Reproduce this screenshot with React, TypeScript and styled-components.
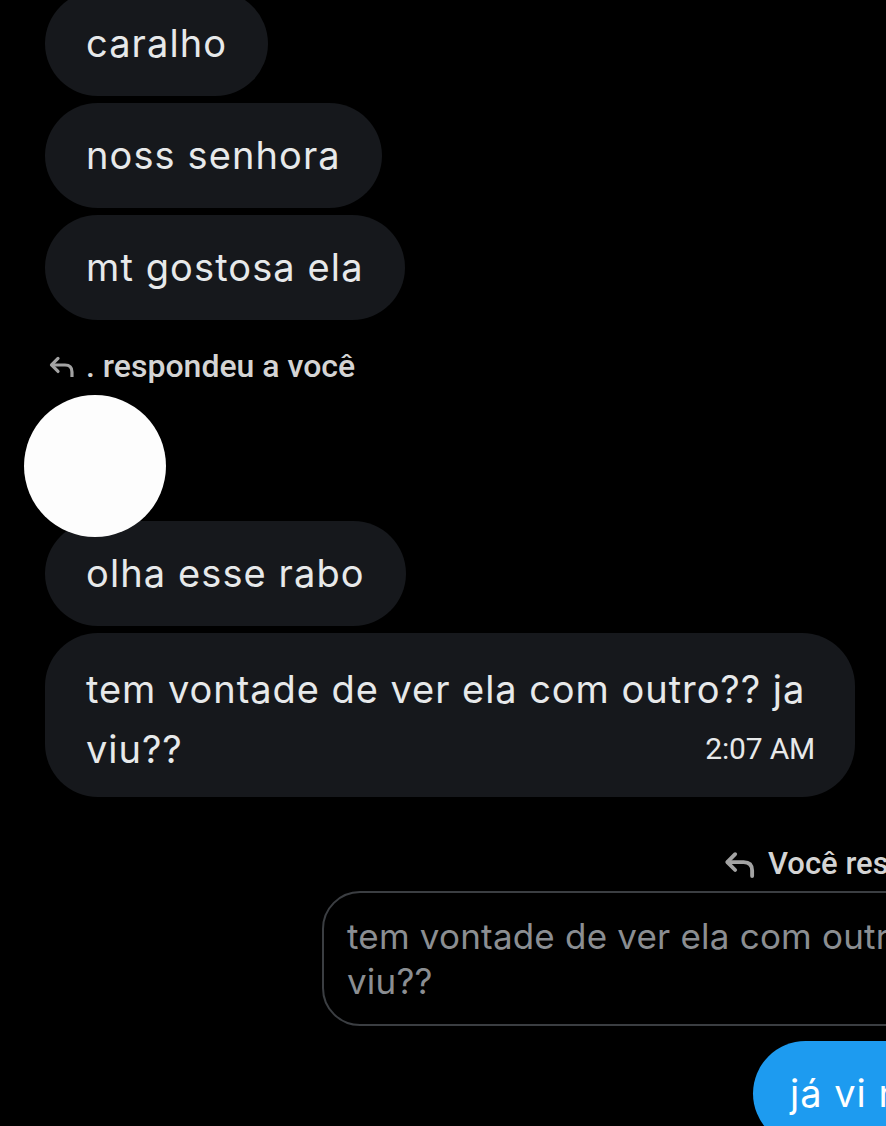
import React from "react";
import styled, { createGlobalStyle } from "styled-components";

const Global = createGlobalStyle`
  html, body {
    margin: 0;
    padding: 0;
    background: #000;
    overflow: hidden;
  }
  body {
    width: 886px;
    height: 1126px;
    font-family: Inter, "Noto Sans", sans-serif;
    -webkit-font-smoothing: antialiased;
  }
`;

const Page = styled.div`
  width: 886px;
  height: 1126px;
  overflow: hidden;
  background: #000;
  display: flex;
  flex-direction: column;
  align-items: flex-start;
`;

const Thread = styled.div`
  display: flex;
  flex-direction: column;
  align-items: flex-start;
  gap: 7px;
  margin-top: -9px;
  padding-left: 45px;
`;

const Bubble = styled.div`
  background: #16181c;
  color: #e7e9ea;
  font-size: 38px;
  line-height: 45px;
  padding: 30px 41px;
  border-radius: 53px;
  letter-spacing: 1.1px;
  white-space: nowrap;
  position: relative;
  z-index: 1;
`;

const LongBubble = styled.div`
  box-sizing: border-box;
  width: 810px;
  background: #16181c;
  color: #e7e9ea;
  font-size: 38px;
  line-height: 60px;
  padding: 26px 40px 18px 41px;
  border-radius: 53px;
  letter-spacing: 0.95px;
`;

const Time = styled.span`
  float: right;
  font-family: Roboto, "Liberation Sans", sans-serif;
  font-size: 30px;
  letter-spacing: -0.2px;
  line-height: 60px;
  color: #e7e9ea;
`;

const ReplyLabel = styled.div<{ $size: number; $gap: number; $offset?: number }>`
  display: flex;
  align-items: center;
  gap: ${(p) => p.$gap}px;
  margin-left: ${(p) => p.$offset ?? 0}px;
  font-family: Roboto, "Liberation Sans", sans-serif;
  font-weight: 500;
  font-size: ${(p) => p.$size}px;
  line-height: 36px;
  color: #d4d4d4;
  white-space: nowrap;
`;

const LeftLabelRow = styled.div`
  margin-top: 21px;
  margin-bottom: 4px;
  padding-left: 3px;
`;

const Avatar = styled.div`
  width: 142px;
  height: 142px;
  border-radius: 50%;
  background: #fdfdfd;
  margin-left: -21px;
  margin-bottom: -23px;
  position: relative;
  z-index: 2;
`;

const RightGroup = styled.div`
  display: flex;
  flex-direction: column;
  align-items: flex-start;
  margin-left: 322px;
  margin-top: 49px;
  width: 800px;
`;

const Quote = styled.div`
  box-sizing: border-box;
  width: 760px;
  margin-top: 9px;
  border: 2px solid #3b3e42;
  border-radius: 38px;
  padding: 21px 24px 20px 23px;
  color: #8b8e92;
  font-size: 35px;
  line-height: 45px;
  letter-spacing: 0.2px;
`;

const BlueBubble = styled.div`
  margin-left: 431px;
  margin-top: 15px;
  background: #1d9bf0;
  color: #fff;
  font-size: 38px;
  line-height: 45px;
  letter-spacing: 1px;
  padding: 30px 37px;
  border-radius: 53px 53px 0 53px;
  white-space: nowrap;
`;

const ReplyIcon = ({ w }: { w: number }) => (
  <svg width={w} height={w * 0.82} viewBox="0 0 28 23" fill="none">
    <path
      d="M10 3.5 L3.5 10 L10 16.5"
      stroke="#a3a3a3"
      strokeWidth="3.2"
      strokeLinecap="round"
      strokeLinejoin="round"
    />
    <path
      d="M4 10 H17 Q24 10 24 17 V21.5"
      stroke="#a3a3a3"
      strokeWidth="3.2"
      strokeLinecap="round"
    />
  </svg>
);

export default function App() {
  return (
    <>
      <Global />
      <Page>
        <Thread>
          <Bubble>caralho</Bubble>
          <Bubble>noss senhora</Bubble>
          <Bubble>mt gostosa ela</Bubble>
          <LeftLabelRow>
            <ReplyLabel $size={32} $gap={10}>
              <ReplyIcon w={28} />
              <span>. respondeu a você</span>
            </ReplyLabel>
          </LeftLabelRow>
          <Avatar />
          <Bubble>olha esse rabo</Bubble>
          <LongBubble>
            tem vontade de ver ela com outro?? ja viu??
            <Time>2:07 AM</Time>
          </LongBubble>
        </Thread>
        <RightGroup>
          <ReplyLabel $size={31} $gap={11} $offset={401}>
            <ReplyIcon w={34} />
            <span>Você respondeu a .</span>
          </ReplyLabel>
          <Quote>tem vontade de ver ela com outro?? ja viu??</Quote>
          <BlueBubble>já vi não</BlueBubble>
        </RightGroup>
      </Page>
    </>
  );
}
